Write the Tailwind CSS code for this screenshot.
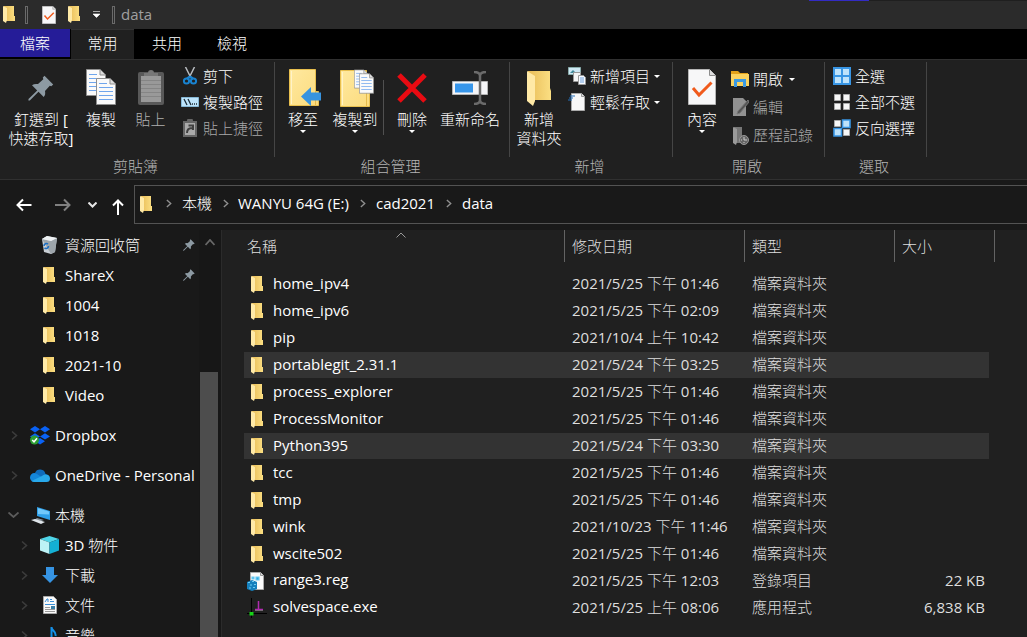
<!DOCTYPE html>
<html lang="zh-Hant">
<head>
<meta charset="utf-8">
<title>data</title>
<script src="https://cdn.jsdelivr.net/npm/@tailwindcss/browser@4"></script>
</head>
<body class="flex h-screen flex-col overflow-hidden bg-[#191919] font-['Open_Sans','Noto_Sans_CJK_TC_Light','Noto_Sans_CJK_TC',sans-serif] text-[15px] leading-[19px] text-white">

<svg class="absolute h-0 w-0" aria-hidden="true">
  <defs>
    <linearGradient id="gf" x1="0" x2="1"><stop offset="0" stop-color="#e9bd58"/><stop offset="1" stop-color="#fbdf83"/></linearGradient>
    <linearGradient id="gb" x1="0" x2="1" y2="1"><stop offset="0" stop-color="#ffe9a0"/><stop offset="1" stop-color="#fbdb7d"/></linearGradient>
  </defs>
  <symbol id="folder" viewBox="0 0 12 17"><path d="M1 0h10v10h1v5H1z" fill="url(#gf)"/><path d="M0 0l4 2v12l-1 3-3-2z" fill="#ffeaa8"/></symbol>
  <symbol id="pin" viewBox="0 0 26 26"><path d="M16.500 .8L25.200 9.500 23.300 11.200 21.800 10.700 17 16c.5 2.500.2 4.500-1.300 6L10.500 16.800 1.800 25.600.4 25.500.5 24.100 9.200 15.500 4 10.300c1.700-1.300 3.700-1.700 6-1.200L15.300 4.200 14.800 2.500z" fill="#8d9aa3"/></symbol>
  <symbol id="check" viewBox="0 0 28 36"><path d="M.5.500h21l6 6v29H.5z" fill="#f7f7f8" stroke="#b5b5b5"/><path d="M21.500.500v6h6" fill="#ddd" stroke="#8c8c8c"/><path d="M5 19l6 7L23.500 13.500" fill="none" stroke="#f05a1c" stroke-width="3"/></symbol>
  <symbol id="page" viewBox="0 0 20 27"><path d="M.5.500h13.500l5.500 5.500v20.500H.5z" fill="#fafafa" stroke="#8f8f8f"/><path d="M14 .5v5.500h5.500" fill="#ddd" stroke="#8f8f8f"/><path d="M3 5.500h8M3 9.500h14M3 13.500h14M3 17.500h14M3 21.500h14" stroke="#6fa5ec" fill="none"/></symbol>
  <symbol id="bigfolder" viewBox="0 0 30 37"><path d="M.5.500h26v22h3v14H.5z" fill="url(#gb)" stroke="#e8bf4e"/><path d="M2.500 2v33" stroke="#fff3c8"/><path d="M26.500 23v13" stroke="#e5ba4c"/></symbol>
  <symbol id="chev" viewBox="0 0 7 10"><path d="M1 1l4.500 4L1 9" fill="none" stroke="currentColor" stroke-width="1.600"/></symbol>
  <symbol id="down" viewBox="0 0 6 3"><path d="M0 0h6L3 3z" fill="currentColor"/></symbol>
</svg>

<header class="relative flex h-[29px] shrink-0 items-center bg-[#2b2b2b]">
  <span class="absolute top-0 right-0 left-[78.8%] h-px bg-[#1f1f1f]"><span class="block h-px w-15 bg-[#332bc4]"></span></span>
  <svg class="ml-[3px] h-[17px] w-3"><use href="#folder"/></svg>
  <span class="ml-[10px] h-[18px] w-[3px] border border-[#6a6a6a]"></span>
  <button class="ml-[14px]" aria-label="內容"><svg class="h-[18px] w-[14px]"><use href="#check"/></svg></button>
  <button class="ml-3" aria-label="新增資料夾"><svg class="h-[17px] w-3"><use href="#folder"/></svg></button>
  <button class="ml-[13px]" aria-label="自訂快速存取工具列"><svg class="h-[7px] w-[7px]" viewBox="0 0 7 7"><path d="M0 .5h7M0 3h7L3.500 6.500z" fill="#fff" stroke="#fff" stroke-width=".6"/></svg></button>
  <span class="ml-[12px] h-[18px] w-[3px] border border-[#6a6a6a]"></span>
  <h1 class="ml-[6px] text-[#a0a0a0]">data</h1>
</header>

<nav class="flex h-[30px] shrink-0 items-start bg-black">
  <button class="h-7 w-[70px] bg-[#251c98]">檔案</button>
  <button class="ml-px h-[31px] w-[63px] border-t border-[#333] bg-[#202020] pb-1">常用</button>
  <button class="h-[29px] w-[66px]">共用</button>
  <button class="h-[29px] w-16">檢視</button>
</nav>

<section class="flex h-[121px] shrink-0 border-y border-[#303030] bg-[#202020] pt-0.5">
  <div class="flex w-[275px] shrink-0 flex-col">
    <div class="flex h-[95px] border-r border-[#454545] pt-[7px]">
      <button class="flex w-[82px] flex-col items-center"><span class="flex h-[41px] items-center pb-1"><svg class="h-[26px] w-[26px]"><use href="#pin"/></svg></span>釘選到 [<br>快速存取]</button>
      <button class="flex w-[38px] flex-col items-center"><span class="h-[41px]"><svg class="h-[37px] w-[30px]" viewBox="0 0 30 37"><use href="#page" width="20" height="27"/><use href="#page" x="10" y="9" width="20" height="27"/></svg></span>複製</button>
      <button class="flex w-[61px] flex-col items-center text-[#b0b0b0]" disabled><span class="h-[41px]"><svg class="h-[37px] w-[26px]" viewBox="0 0 26 37"><rect y="3" width="26" height="33" rx="2" fill="#595959"/><path d="M3 7h20v26H3z" fill="#999"/><path d="M3 11.500h20M3 15.500h20M3 19.500h20M3 23.500h20M3 27.500h20" stroke="#858585"/><path d="M6 7V4h4a3 3 0 0 1 6 0h4v3z" fill="#777"/></svg></span>貼上</button>
      <div class="flex flex-col">
        <button class="flex h-[26px] items-center gap-1 pb-3"><svg class="h-[18px] w-[18px]" viewBox="0 0 18 18"><path d="M4.500 0l5.500 11M13.500 0L8 11" stroke="#b8bcc0" stroke-width="1.500"/><path d="M9 9.500l3 2.200M9 9.500l-3 2.200" stroke="#1983d0" stroke-width="2.400"/><circle cx="5.500" cy="14" r="2.600" fill="none" stroke="#1983d0" stroke-width="2"/><circle cx="12.500" cy="14" r="2.600" fill="none" stroke="#1983d0" stroke-width="2"/></svg>剪下</button>
        <button class="flex h-[26px] items-center gap-1 pb-3"><svg class="h-[18px] w-[18px]" viewBox="0 0 18 18"><path d="M.5 4.500h17v9H.5z" fill="#bde4fb" stroke="#86b8d6"/><path d="M3 6l3 6M7 6l3 6M11 11h1M13 11h1M15 11h1" stroke="#1c2d38" stroke-width="1.300"/></svg>複製路徑</button>
        <button class="flex h-[26px] items-center gap-1 pb-3 text-[#a8a8a8]" disabled><svg class="h-[18px] w-[18px]" viewBox="0 0 18 18"><path d="M2 2h4a3 3 0 0 1 6 0h4v16H2z" fill="#666"/><path d="M4 4h10v12H4z" fill="#aaa"/><path d="M6 14c0-4 2-5 5-5M7.500 6.500H12V11" fill="none" stroke="#404040" stroke-width="2"/></svg>貼上捷徑</button>
      </div>
    </div>
    <p class="pr-1 text-center text-[#b4b4b4]">剪貼簿</p>
  </div>

  <div class="flex w-[235px] shrink-0 flex-col">
    <div class="flex h-[95px] border-r border-[#454545] pt-[7px] pl-1">
      <button class="flex w-12 flex-col items-center"><span class="h-[41px]"><svg class="ml-1 h-[37px] w-[32px]" viewBox="0 0 32 37"><use href="#bigfolder" width="30" height="37"/><path d="M12 27.500L22 18v5.500h10v8H22V37z" fill="#3894e0"/></svg></span>移至<svg class="mt-px h-[3px] w-[6px]"><use href="#down"/></svg></button>
      <button class="flex w-14 flex-col items-center"><span class="h-[41px]"><svg class="ml-1 h-[38px] w-[34px]" viewBox="0 0 34 38"><use href="#bigfolder" y="1" width="30" height="37"/><use href="#page" x="14" width="14" height="20"/><use href="#page" x="19" y="4" width="15" height="21"/></svg></span>複製到<svg class="mt-px h-[3px] w-[6px]"><use href="#down"/></svg></button>
      <span class="mt-[11px] h-[55px] w-px bg-[#505050]"></span>
      <button class="flex w-14 flex-col items-center"><span class="h-[41px] pt-1"><svg class="h-[30px] w-[30px]" viewBox="0 0 30 30"><path d="M2 2l26 26M28 2L2 28" stroke="#e90b12" stroke-width="5"/></svg></span>刪除<svg class="mt-px h-[3px] w-[6px]"><use href="#down"/></svg></button>
      <button class="flex w-15 flex-col items-center"><span class="h-[41px] pt-0.5"><svg class="h-[34px] w-9" viewBox="0 0 36 34"><path d="M.5 10.500h35v13H.5z" fill="#f5f5f7" stroke="#b4b4b4"/><path d="M3 12.500h18v9H3z" fill="#3796ea"/><path d="M28 4v26M22 1c4 0 6 1 6 4 0-3 2-4 6-4M22 33c4 0 6-1 6-4 0 3 2 4 6 4" fill="none" stroke="#6b6b6b" stroke-width="2.500"/></svg></span>重新命名</button>
    </div>
    <p class="pr-1 text-center text-[#b4b4b4]">組合管理</p>
  </div>

  <div class="flex w-[163px] shrink-0 flex-col">
    <div class="flex h-[95px] border-r border-[#454545] pt-[7px]">
      <button class="flex w-[58px] flex-col items-center"><span class="h-[41px] pt-0.5"><svg class="h-[36px] w-6" viewBox="0 0 24 36"><path d="M1 0h22v17l1 3v9H1z" fill="url(#gf)"/><path d="M0 0l8 5v25l-2 5-6-5z" fill="#ffe9a6"/></svg></span>新增<br>資料夾</button>
      <div class="flex flex-col">
        <button class="flex h-[26px] items-center gap-1 pb-3"><svg class="h-[18px] w-[18px]" viewBox="0 0 18 18"><path d="M.5.500h12v7H.5z" fill="#cfe9f5" stroke="#8aa"/><path d="M2 6l3-3 3 3z" fill="#418a9a"/><path d="M5.500 5.500h7v9h-7z" fill="#f5f5f5" stroke="#999"/><path d="M10.500 8.500h5l2 2v7h-7z" fill="#f7faff" stroke="#999"/><path d="M12 11h4M12 13h4M12 15h4" stroke="#6c9fda"/></svg>新增項目<svg class="h-[3px] w-[6px]"><use href="#down"/></svg></button>
        <button class="flex h-[26px] items-center gap-1 pb-3"><svg class="h-[18px] w-[18px]" viewBox="0 0 18 18"><path d="M3.500.500h10l3 3v14h-13z" fill="#f7f7f7" stroke="#aaa"/><path d="M13.500.500v3h3" fill="#ddd" stroke="#999"/><path d="M2 3h5M1 5h4M0 7h4" stroke="#2571bc" stroke-width="1.200"/></svg>輕鬆存取<svg class="h-[3px] w-[6px]"><use href="#down"/></svg></button>
      </div>
    </div>
    <p class="pr-1 text-center text-[#b4b4b4]">新增</p>
  </div>

  <div class="flex w-[152px] shrink-0 flex-col">
    <div class="flex h-[95px] border-r border-[#454545] pt-[7px]">
      <button class="flex w-[58px] flex-col items-center"><span class="h-[41px]"><svg class="h-9 w-7"><use href="#check"/></svg></span>內容<svg class="mt-px h-[3px] w-[6px]"><use href="#down"/></svg></button>
      <div class="flex flex-col">
        <button class="flex h-7 items-center gap-1 pb-2"><svg class="h-[18px] w-[18px]" viewBox="0 0 18 18"><path d="M0 1h7l2 2h8v5H0z" fill="#e3a21a"/><path d="M0 4h18v12H0z" fill="#fbd35f"/><path d="M3 17V9h12v8h-3v-5H6v5z" fill="#3d9be2"/></svg>開啟<svg class="ml-0.5 h-[3px] w-[6px]"><use href="#down"/></svg></button>
        <button class="flex h-7 items-center gap-1 pb-2 text-[#a8a8a8]" disabled><svg class="h-[18px] w-[18px]" viewBox="0 0 18 18"><path d="M2 0h10l3 3v15H2z" fill="#929292"/><path d="M17 2L7 13l-1 3 3-1L18 4z" fill="#555" stroke="#777"/></svg>編輯</button>
        <button class="flex h-[29px] items-center gap-1 pb-2 text-[#a8a8a8]" disabled><svg class="h-[18px] w-[18px]" viewBox="0 0 18 18"><path d="M3 0h8v16H3z" fill="#777"/><path d="M2 0l4 2v13l-1 3-3-2z" fill="#9a9a9a"/><circle cx="13" cy="13" r="4.500" fill="#666" stroke="#999"/><path d="M13 10v3h3M10 13h1M13 16v-1" fill="none" stroke="#ccc"/></svg>歷程記錄</button>
      </div>
    </div>
    <p class="pr-1 text-center text-[#b4b4b4]">開啟</p>
  </div>

  <div class="flex w-[102px] shrink-0 flex-col">
    <div class="flex h-[95px] flex-col border-r border-[#454545] pt-[7px] pl-2">
      <button class="flex h-[26px] items-center gap-1 pb-3"><svg class="h-[18px] w-[18px]" viewBox="0 0 18 18"><path d="M0 0h18v18H0z" fill="#3895e4"/><path d="M2 2h6v6H2zM10 2h6v6h-6zM2 10h6v6H2zM10 10h6v6h-6z" fill="#bde2fb"/></svg>全選</button>
      <button class="flex h-[26px] items-center gap-1 pb-3"><svg class="h-[18px] w-[18px]" viewBox="0 0 18 18"><path d="M1.500 1.500h6v6h-6zM10.500 1.500h6v6h-6zM1.500 10.500h6v6h-6zM10.500 10.500h6v6h-6z" fill="#f7f7f7" stroke="#aaa"/></svg>全部不選</button>
      <button class="flex h-[26px] items-center gap-1 pb-3"><svg class="h-[18px] w-[18px]" viewBox="0 0 18 18"><path d="M1.500 1.500h6v6h-6zM10.500 10.500h6v6h-6z" fill="#f7f7f7" stroke="#aaa"/><path d="M9.500 1h7.500v7.500H9.500zM1 9.500h7.500V17H1z" fill="#bde2fb" stroke="#3895e4" stroke-width="1.600"/></svg>反向選擇</button>
    </div>
    <p class="pr-1 text-center text-[#b4b4b4]">選取</p>
  </div>
</section>

<section class="flex h-[50px] shrink-0 items-start pt-[5px]">
  <div class="flex h-[39px] w-[134px] shrink-0 items-center pl-4">
    <button aria-label="上一頁"><svg class="h-4 w-4" viewBox="0 0 16 16"><path d="M15.500 8H1M7 2.500L1.500 8 7 13.500" fill="none" stroke="#fff" stroke-width="2"/></svg></button>
    <button class="ml-[23px]" aria-label="下一頁"><svg class="h-4 w-4" viewBox="0 0 16 16"><path d="M0 8h14M9 2.500L14.500 8 9 13.500" fill="none" stroke="#808080" stroke-width="2"/></svg></button>
    <button class="ml-[17px]" aria-label="最近的位置"><svg class="h-[6px] w-[9px]" viewBox="0 0 9 6"><path d="M.5.500l4 4 4-4" fill="none" stroke="#e6e6e6" stroke-width="2"/></svg></button>
    <button class="ml-[15px] pt-1" aria-label="上移"><svg class="h-4 w-3" viewBox="0 0 12 16"><path d="M6 16V1M1 6.500l5-5 5 5" fill="none" stroke="#fff" stroke-width="2"/></svg></button>
  </div>
  <div class="flex h-[39px] flex-1 items-center border border-r-0 border-[#535353] pb-0.5 pl-[5px]">
    <svg class="mt-0.5 h-[17px] w-3"><use href="#folder"/></svg>
    <svg class="ml-[14px] h-[9px] w-[6px] text-[#909090]"><use href="#chev"/></svg>
    <a href="#" class="ml-[10px]">本機</a>
    <svg class="ml-[11px] h-[9px] w-[6px] text-[#909090]"><use href="#chev"/></svg>
    <a href="#" class="ml-[9px]">WANYU 64G (E:)</a>
    <svg class="ml-[11px] h-[9px] w-[6px] text-[#909090]"><use href="#chev"/></svg>
    <a href="#" class="ml-[10px]">cad2021</a>
    <svg class="ml-[11px] h-[9px] w-[6px] text-[#909090]"><use href="#chev"/></svg>
    <a href="#" class="ml-[10px]">data</a>
  </div>
</section>

<main class="flex min-h-0 flex-1">
  <aside class="w-[199px] shrink-0 overflow-hidden whitespace-nowrap">
    <ul class="[&>li]:flex [&>li]:h-[30px] [&>li]:items-center [&>li]:pl-[41px]">
      <li><svg class="h-[18px] w-[17px]" viewBox="0 0 17 18"><path d="M1 3l5-3 10 2-2 14-4 2-7-2z" fill="#c9cfd4"/><path d="M1 3l9 2 6-3-2 14-4 2z" fill="#9da5ab"/><path d="M1 3l5-3 10 2-6 3z" fill="#eef1f3"/><path d="M3 10a2.500 2.500 0 0 1 4-2M7.500 10a2.500 2.500 0 0 1-4 2" fill="none" stroke="#1b6fc4" stroke-width="1.600"/></svg><a href="#" class="ml-[7px] flex-1">資源回收筒</a><svg class="mr-1 h-3 w-3"><use href="#pin"/></svg></li>
      <li><svg class="ml-0.5 h-[17px] w-3"><use href="#folder"/></svg><a href="#" class="ml-[10px] flex-1">ShareX</a><svg class="mr-1 h-3 w-3"><use href="#pin"/></svg></li>
      <li><svg class="ml-0.5 h-[17px] w-3"><use href="#folder"/></svg><a href="#" class="ml-[10px]">1004</a></li>
      <li><svg class="ml-0.5 h-[17px] w-3"><use href="#folder"/></svg><a href="#" class="ml-[10px]">1018</a></li>
      <li><svg class="ml-0.5 h-[17px] w-3"><use href="#folder"/></svg><a href="#" class="ml-[10px]">2021-10</a></li>
      <li><svg class="ml-0.5 h-[17px] w-3"><use href="#folder"/></svg><a href="#" class="ml-[10px]">Video</a></li>
    </ul>
    <ul class="mt-[10px] flex flex-col gap-[10px] [&>li]:flex [&>li]:h-[30px] [&>li]:items-center [&>li]:pl-[11px]">
      <li><svg class="h-[11px] w-[7px] text-[#3c3c3c]"><use href="#chev"/></svg>
        <svg class="ml-3 h-[19px] w-5" viewBox="0 0 20 19"><path d="M5 0l5 3.200-5 3.200L0 3.200zM15 0l5 3.200-5 3.200-5-3.200zM5 7.200l5 3.200-5 3.200-5-3.200zM15 7.200l5 3.200-5 3.200-5-3.200zM10 12l5 3.200-5 3.200-5-3.200z" fill="#0a62f5"/><circle cx="4.500" cy="14" r="4.500" fill="#2e9e33"/><path d="M2.200 14l1.800 1.800 3-3.500" fill="none" stroke="#fff" stroke-width="1.500"/></svg><a href="#" class="ml-[5px]">Dropbox</a></li>
      <li><svg class="h-[11px] w-[7px] text-[#3c3c3c]"><use href="#chev"/></svg>
        <svg class="ml-3 h-[13px] w-5" viewBox="0 0 20 13"><path d="M5 4a5.500 5.500 0 0 1 10.500 1A4 4 0 0 1 17 12H4A4 4 0 0 1 5 4z" fill="#0f6cbd"/><path d="M0 8.500A4.500 4.500 0 0 1 7 5l9 6-3 2H4.500A4.500 4.500 0 0 1 0 8.500z" fill="#1487db"/><path d="M1.500 12L12 7c4-3 8-1 8 2.500A3.500 3.500 0 0 1 16.500 13h-12c-1 0-2-.3-3-1z" fill="#28a8ea"/></svg><a href="#" class="ml-[5px]">OneDrive - Personal</a></li>
      <li><svg class="-ml-[3px] h-[6px] w-[11px]" viewBox="0 0 11 6"><path d="M.5.500l5 4.500 5-4.500" fill="none" stroke="#5c5c5c" stroke-width="1.800"/></svg>
        <svg class="ml-3 h-[17px] w-[19px]" viewBox="0 0 19 17"><path d="M6 0l13 4v9L6 9z" fill="#2f9fe8"/><path d="M7 1.200l11 3.400v3L7 7z" fill="#71c8fb"/><path d="M6 11l7 2-3 1-7-1z" fill="#88939c"/><path d="M0 13l4-1 10 3-4 2z" fill="#dfe5ea"/></svg><a href="#" class="ml-[5px]">本機</a></li>
    </ul>
    <ul class="[&>li]:flex [&>li]:h-[30px] [&>li]:items-center [&>li]:pl-[21px]">
      <li><svg class="h-[11px] w-[7px] text-[#3c3c3c]"><use href="#chev"/></svg>
        <svg class="ml-3 h-[18px] w-[19px]" viewBox="0 0 19 18"><path d="M9.500 0L19 3 9.500 6.500 0 3z" fill="#4fd5e8"/><path d="M0 3l9.500 3.500V18L0 14.500z" fill="#bdf2f6"/><path d="M19 3L9.500 6.500V18L19 14.500z" fill="#14b0d4"/></svg><a href="#" class="ml-[6px]">3D 物件</a></li>
      <li><svg class="h-[11px] w-[7px] text-[#3c3c3c]"><use href="#chev"/></svg>
        <svg class="ml-[14px] h-4 w-4" viewBox="0 0 16 16"><path d="M4 0h8v8h4l-8 8-8-8h4z" fill="#3694e3"/></svg><a href="#" class="ml-[7px]">下載</a></li>
      <li><svg class="h-[11px] w-[7px] text-[#3c3c3c]"><use href="#chev"/></svg>
        <svg class="ml-[15px] h-[18px] w-[14px]" viewBox="0 0 14 18"><path d="M.5.500h10l3 3v14H.5z" fill="#fafafa" stroke="#aaa"/><path d="M2 6l2-3h1v3M7 3.500h2M7 5.500h4M2 8.500h10" fill="none" stroke="#3b8fd8"/><path d="M2 11.500h5M2 13.500h10M2 15.500h10" stroke="#999"/><path d="M8 10h4v3H8z" fill="#3a7fa8"/></svg><a href="#" class="ml-2">文件</a></li>
      <li><svg class="h-[11px] w-[7px] text-[#3c3c3c]"><use href="#chev"/></svg>
        <svg class="ml-5 h-[18px] w-[9px]" viewBox="0 0 9 18"><path d="M3.500 15V1c0 4 5 4 4 9" fill="none" stroke="#1590e8" stroke-width="2"/><ellipse cx="2.500" cy="15" rx="2.500" ry="2" fill="#1590e8"/></svg><a href="#" class="ml-2">音樂</a></li>
    </ul>
  </aside>

  <div class="flex w-[23px] shrink-0 flex-col border-r border-[#2b2b2b] bg-[#171717] pr-[2px] pl-px">
    <svg class="mx-auto mt-[9px] h-[7px] w-[10px]" viewBox="0 0 10 7"><path d="M.5 6L5 1l4.500 5" fill="none" stroke="#686868" stroke-width="1.800"/></svg>
    <div class="mt-[126px] mr-px flex-1 bg-[#4d4d4d]"></div>
  </div>

  <div class="relative flex-1 overflow-hidden bg-[#202020] pl-[22px]">
    <svg class="absolute top-0.5 left-[174px] h-[6px] w-[10px]" viewBox="0 0 10 6"><path d="M.5 5.500L5 1l4.500 4.500" fill="none" stroke="#999"/></svg>
    <table class="w-[751px] table-fixed border-separate border-spacing-0 text-left text-[#dedede] [&_td]:h-[27px] [&_td]:border-t [&_td]:border-transparent [&_td]:bg-clip-padding [&_td]:p-0 [&_td]:pb-px [&_td]:pl-[7px] [&_td:first-child]:text-white [&_td:last-child]:border-r-[6px] [&_td:last-child]:pr-1 [&_td:last-child]:text-right [&_td_svg]:mr-[10px] [&_td_svg]:inline-block [&_td_svg]:align-middle">
      <colgroup><col class="w-[321px]"><col class="w-[180px]"><col class="w-[150px]"><col class="w-[100px]"></colgroup>
      <thead>
        <tr>
          <th class="p-0 pb-2 font-normal"><div class="h-8 border-r border-[#636363] pt-[7px] pl-[3px]">名稱</div></th>
          <th class="p-0 pb-2 font-normal"><div class="h-8 border-r border-[#636363] pt-[7px] pl-[7px]">修改日期</div></th>
          <th class="p-0 pb-2 font-normal"><div class="h-8 border-r border-[#636363] pt-[7px] pl-[7px]">類型</div></th>
          <th class="p-0 pb-2 font-normal"><div class="h-8 border-r border-[#636363] pt-[7px] pl-[7px]">大小</div></th>
        </tr>
      </thead>
      <tbody>
        <tr><td><svg class="h-[17px] w-3"><use href="#folder"/></svg>home_ipv4</td><td>2021/5/25 下午 01:46</td><td>檔案資料夾</td><td></td></tr>
        <tr><td><svg class="h-[17px] w-3"><use href="#folder"/></svg>home_ipv6</td><td>2021/5/25 下午 02:09</td><td>檔案資料夾</td><td></td></tr>
        <tr><td><svg class="h-[17px] w-3"><use href="#folder"/></svg>pip</td><td>2021/10/4 上午 10:42</td><td>檔案資料夾</td><td></td></tr>
        <tr class="[&>td]:bg-[#333333]"><td><svg class="h-[17px] w-3"><use href="#folder"/></svg>portablegit_2.31.1</td><td>2021/5/24 下午 03:25</td><td>檔案資料夾</td><td></td></tr>
        <tr><td><svg class="h-[17px] w-3"><use href="#folder"/></svg>process_explorer</td><td>2021/5/25 下午 01:46</td><td>檔案資料夾</td><td></td></tr>
        <tr><td><svg class="h-[17px] w-3"><use href="#folder"/></svg>ProcessMonitor</td><td>2021/5/25 下午 01:46</td><td>檔案資料夾</td><td></td></tr>
        <tr class="[&>td]:bg-[#333333]"><td><svg class="h-[17px] w-3"><use href="#folder"/></svg>Python395</td><td>2021/5/24 下午 03:30</td><td>檔案資料夾</td><td></td></tr>
        <tr><td><svg class="h-[17px] w-3"><use href="#folder"/></svg>tcc</td><td>2021/5/25 下午 01:46</td><td>檔案資料夾</td><td></td></tr>
        <tr><td><svg class="h-[17px] w-3"><use href="#folder"/></svg>tmp</td><td>2021/5/25 下午 01:46</td><td>檔案資料夾</td><td></td></tr>
        <tr><td><svg class="h-[17px] w-3"><use href="#folder"/></svg>wink</td><td>2021/10/23 下午 11:46</td><td>檔案資料夾</td><td></td></tr>
        <tr><td><svg class="h-[17px] w-3"><use href="#folder"/></svg>wscite502</td><td>2021/5/25 下午 01:46</td><td>檔案資料夾</td><td></td></tr>
        <tr><td><svg class="-ml-1 h-[19px] w-4 overflow-visible" viewBox="0 0 16 19"><path d="M3.500.500h10l3 3v14h-13z" fill="#fafafa" stroke="#aaa"/><path d="M13.500.500v3h3" fill="#ddd" stroke="#999"/><path d="M0 10l5-2 5 2v7l-5 2-5-2z" fill="#1580bd"/><path d="M1 10.500h2M5 9.500h2M3 13h2M7 12.500h2M2 16h2M6 15.500h2M9 5h3v3H9zM5 5h2v2H5z" fill="#31a8e0" stroke="#6ccbf2" stroke-width="1.200"/></svg>range3.reg</td><td>2021/5/25 下午 12:03</td><td>登錄項目</td><td>22 KB</td></tr>
        <tr><td><svg class="-ml-1 h-5 w-4 overflow-visible" viewBox="0 0 16 20"><path d="M4.500 0v20M0 15.500h20" stroke="#000"/><path d="M2.500 14h4v3.500h-4z" fill="#17d417"/><path d="M11.500 3v8M8 11.500h8" stroke="#b02cb0" stroke-width="1.500"/><path d="M8 12.500h8" stroke="#999" stroke-width=".6"/></svg>solvespace.exe</td><td>2021/5/25 上午 08:06</td><td>應用程式</td><td>6,838 KB</td></tr>
      </tbody>
    </table>
  </div>
</main>
</body>
</html>
